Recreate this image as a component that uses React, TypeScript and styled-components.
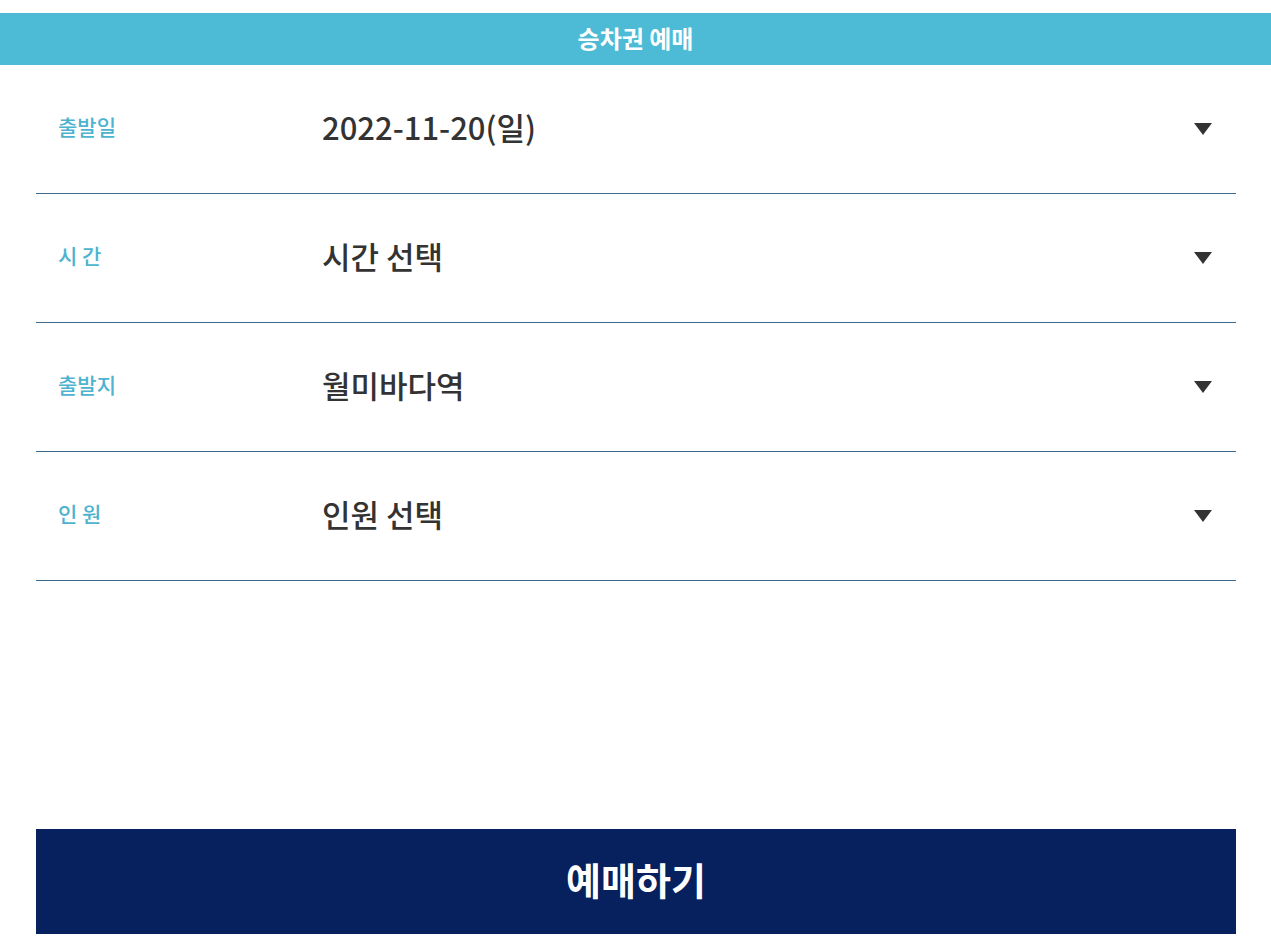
import React, { FC } from "react"
import styled, { createGlobalStyle } from "styled-components"

const GlobalStyle = createGlobalStyle`
  html, body {
    margin: 0;
    padding: 0;
    background: #fff;
    font-family: "Noto Sans CJK KR", "Noto Sans", sans-serif;
  }
`

type Field = {
  label: string
  value: string
}

const fields: Field[] = [
  { label: "출발일", value: "2022-11-20(일)" },
  { label: "시 간", value: "시간 선택" },
  { label: "출발지", value: "월미바다역" },
  { label: "인 원", value: "인원 선택" },
]

const App: FC = () => {
  return (
    <Page>
      <GlobalStyle />
      <Header>승차권 예매</Header>
      <Form>
        {fields.map((f) => (
          <Row key={f.label}>
            <Label>{f.label}</Label>
            <Value>{f.value}</Value>
            <Arrow width="18" height="12" viewBox="0 0 18 12">
              <path d="M0 0 H18 L9 12 Z" fill="#333" />
            </Arrow>
          </Row>
        ))}
      </Form>
      <Submit>예매하기</Submit>
    </Page>
  )
}

export default App

const Page = styled.div`
  padding-top: 13px;
  display: flex;
  flex-direction: column;
`

const Header = styled.div`
  height: 52px;
  background: #4dbad6;
  color: #fff;
  font-size: 24px;
  font-weight: 700;
  line-height: 1;
  display: flex;
  align-items: center;
  justify-content: center;
  padding-bottom: 3px;
  box-sizing: border-box;
`

const Form = styled.div`
  margin: 0 35px 0 36px;
  display: flex;
  flex-direction: column;
`

const Row = styled.div`
  height: 122px;
  border-bottom: 1px solid #3d6a8c;
  display: flex;
  align-items: center;
  padding: 0 24px 6px 22px;
`

const Label = styled.div`
  width: 264px;
  color: #4db3cf;
  font-size: 21px;
  font-weight: 500;
  line-height: 1;
`

const Value = styled.div`
  flex: 1;
  color: #333;
  font-size: 31px;
  font-weight: 500;
  line-height: 1;
`

const Arrow = styled.svg`
  margin-top: 6px;
  flex-shrink: 0;
`

const Submit = styled.button`
  margin: 248px 35px 0 36px;
  height: 105px;
  border: none;
  background: #07205e;
  color: #fff;
  font-family: "Noto Sans CJK KR", sans-serif;
  font-size: 38px;
  font-weight: 700;
  line-height: 1;
  padding: 0 0 6px;
  cursor: pointer;
`
